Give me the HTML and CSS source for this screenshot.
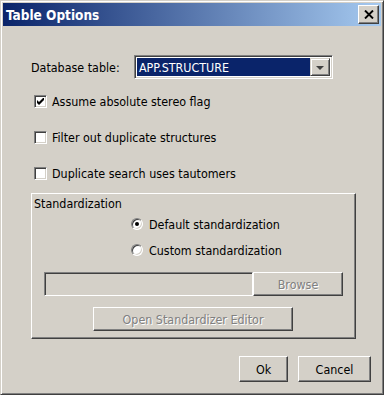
FILE: index.html
```html
<!DOCTYPE html>
<html lang="en">

<head>
  <meta charset="UTF-8">
  <meta name="viewport" content="width=device-width, initial-scale=1.0">
  <title>Table Options</title>
  <link rel="stylesheet" href="styles.css">
</head>

<body>
  <div class="window">
    <div class="titlebar">
      <span class="title">Table Options</span>
      <button class="close" type="button">
        <svg width="10" height="9" viewBox="0 0 10 9">
          <path d="M1 0.5 L9 8.5 M9 0.5 L1 8.5" stroke="#000" stroke-width="1.9" fill="none" />
        </svg>
      </button>
    </div>

    <div class="content">
      <!-- Table picker -->
      <div class="db-row">
        <span class="db-label">Database table:</span>
        <div class="combo">
          <span class="combo-value">APP.STRUCTURE</span>
          <span class="combo-arrow"></span>
        </div>
      </div>

      <!-- Flags -->
      <label class="check first">
        <span class="box">
          <svg width="7" height="7" viewBox="0 0 7 7">
            <path d="M0 2 L2 4 L7 -1 L7 2 L2 7 L0 5 Z" fill="#000" />
          </svg>
        </span>
        Assume absolute stereo flag
      </label>
      <label class="check">
        <span class="box"></span>
        Filter out duplicate structures
      </label>
      <label class="check">
        <span class="box"></span>
        Duplicate search uses tautomers
      </label>

      <!-- Standardization group -->
      <div class="group">
        <div class="legend">Standardization</div>
        <div class="radios">
          <label class="radio"><span class="dot on"></span>Default standardization</label>
          <label class="radio"><span class="dot"></span>Custom standardization</label>
        </div>
        <div class="file-row">
          <div class="field"></div>
          <button class="btn browse" type="button" disabled>Browse</button>
        </div>
        <button class="btn editor" type="button" disabled>Open Standardizer Editor</button>
      </div>

      <div class="actions">
        <button class="btn ok" type="button">Ok</button>
        <button class="btn cancel" type="button">Cancel</button>
      </div>
    </div>
  </div>
</body>

</html>
```

FILE: styles.css
```css
* {
  box-sizing: border-box;
}

body {
  margin: 0;
  font-family: "DejaVu Sans Condensed", "DejaVu Sans", sans-serif;
  font-stretch: condensed;
  font-size: 12.4px;
  color: #000;
  background: #d4d0c8;
}

.window {
  width: 384px;
  height: 395px;
  background: #d4d0c8;
  border: 1px solid;
  border-color: #d4d0c8 #404040 #404040 #d4d0c8;
  box-shadow: inset 1px 1px #fff, inset -1px -1px #808080;
  padding: 2px;
  display: flex;
  flex-direction: column;
}

.titlebar {
  height: 23px;
  flex-shrink: 0;
  background: linear-gradient(to right, #0a246a, #a6caf0);
  display: flex;
  align-items: center;
  justify-content: space-between;
  padding: 0 2px 0 3px;
}

.title {
  color: #fff;
  font-weight: bold;
  font-size: 13.5px;
}

.close {
  width: 21px;
  height: 19px;
  padding: 0;
  background: #d4d0c8;
  border: 1px solid;
  border-color: #fff #404040 #404040 #fff;
  box-shadow: inset -1px -1px #808080;
  display: flex;
  align-items: center;
  justify-content: center;
}

.content {
  flex: 1;
  padding-left: 28px;
  display: flex;
  flex-direction: column;
}

.db-row {
  margin-top: 29px;
  display: flex;
  align-items: center;
}

.db-label {
  width: 103px;
}

.combo {
  width: 199px;
  height: 24px;
  border: 1px solid;
  border-color: #808080 #fff #fff #808080;
  box-shadow: inset 1px 1px #404040, inset -1px -1px #d4d0c8;
  padding: 2px;
  display: flex;
  background: #fff;
}

.combo-value {
  flex: 1;
  background: #0a246a;
  color: #fff;
  padding-left: 2px;
  display: flex;
  align-items: center;
}

.combo-arrow {
  width: 20px;
  background: #d4d0c8;
  border: 1px solid;
  border-color: #d4d0c8 #404040 #404040 #d4d0c8;
  box-shadow: inset 1px 1px #fff, inset -1px -1px #808080;
  position: relative;
}

.combo-arrow::after {
  content: "";
  position: absolute;
  left: 5px;
  top: 7px;
  border-left: 4px solid transparent;
  border-right: 4px solid transparent;
  border-top: 4px solid #404040;
}

.check {
  margin-top: 23px;
  margin-left: 3px;
  height: 13px;
  display: flex;
  align-items: center;
  gap: 5px;
}

.check.first {
  margin-top: 16px;
}

.box {
  width: 13px;
  height: 13px;
  flex-shrink: 0;
  background: #fff;
  border: 1px solid;
  border-color: #808080 #fff #fff #808080;
  box-shadow: inset 1px 1px #404040, inset -1px -1px #d4d0c8;
  display: flex;
  align-items: center;
  justify-content: center;
}

.group {
  margin-top: 13px;
  width: 325px;
  height: 146px;
  border: 1px solid;
  border-color: #fff #404040 #404040 #fff;
  box-shadow: inset -1px -1px #808080;
  padding: 3px 2px 0 2px;
  display: flex;
  flex-direction: column;
}

.legend {
  line-height: 14px;
}

.radios {
  margin-left: 97px;
  margin-top: 7px;
  display: flex;
  flex-direction: column;
  gap: 14px;
}

.radio {
  height: 12px;
  display: flex;
  align-items: center;
  gap: 6px;
}

.dot {
  width: 12px;
  height: 12px;
  border-radius: 50%;
  background: #fff;
  border: 1px solid;
  border-color: #808080 #fff #fff #808080;
  box-shadow: inset 1px 1px #404040, inset -1px -1px #d4d0c8;
  display: flex;
  align-items: center;
  justify-content: center;
}

.dot.on::after {
  content: "";
  width: 4px;
  height: 4px;
  border-radius: 50%;
  background: #000;
}

.file-row {
  margin-top: 16px;
  margin-left: 10px;
  display: flex;
}

.field {
  width: 209px;
  height: 24px;
  border: 1px solid;
  border-color: #808080 #fff #fff #808080;
  box-shadow: inset 1px 1px #404040, inset -1px -1px #d4d0c8;
}

.btn {
  font: inherit;
  color: #000;
  background: #d4d0c8;
  border: 1px solid;
  border-color: #fff #404040 #404040 #fff;
  box-shadow: inset -1px -1px #808080;
  padding: 0;
  height: 24px;
}

.btn:disabled {
  color: #808080;
  text-shadow: 1px 1px #fff;
}

.browse {
  width: 90px;
}

.editor {
  margin-top: 11px;
  margin-left: 59px;
  width: 200px;
}

.actions {
  margin-top: 17px;
  margin-right: 10px;
  display: flex;
  justify-content: flex-end;
  gap: 10px;
}

.ok {
  width: 49px;
  height: 26px;
}

.cancel {
  width: 73px;
  height: 26px;
}
```
